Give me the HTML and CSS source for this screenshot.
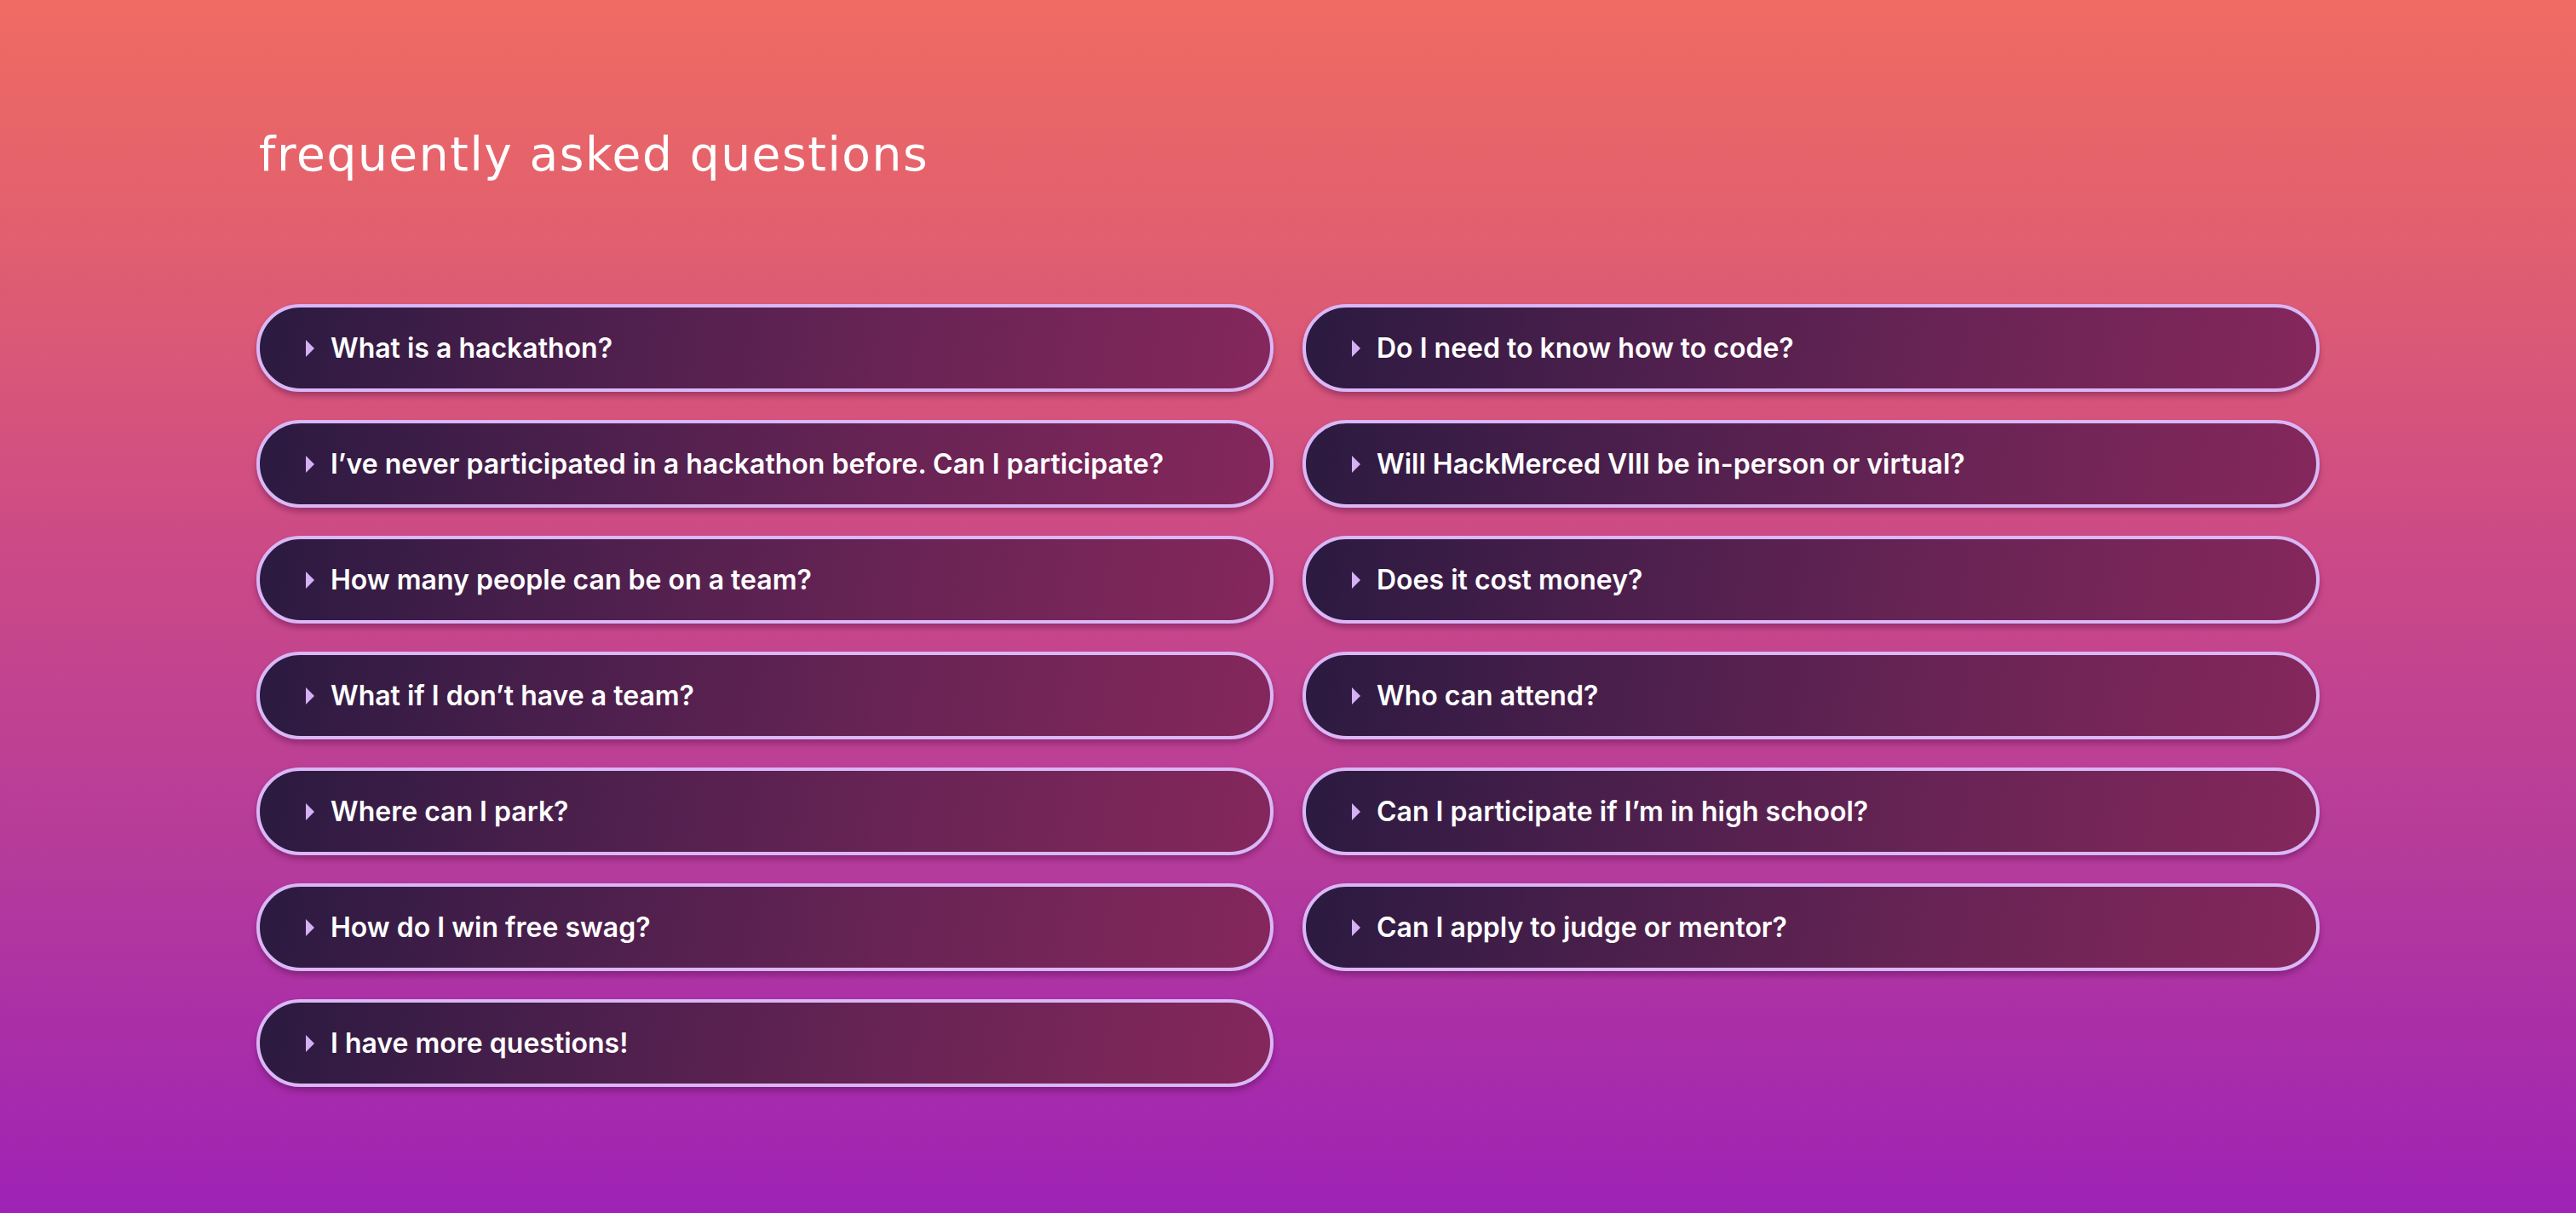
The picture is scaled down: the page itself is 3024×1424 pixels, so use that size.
FILE: index.html
```html
<!DOCTYPE html>
<html lang="en">
<head>
<meta charset="utf-8">
<title>FAQ</title>
<link rel="stylesheet" href="styles.css">
</head>
<body>
<section class="faq">
  <h2 class="faq-title">frequently asked questions</h2>
  <div class="faq-grid">
    <div class="faq-col">
      <div class="faq-item"><span class="arrow"></span><span class="q">What is a hackathon?</span></div>
      <div class="faq-item"><span class="arrow"></span><span class="q">I’ve never participated in a hackathon before. Can I participate?</span></div>
      <div class="faq-item"><span class="arrow"></span><span class="q">How many people can be on a team?</span></div>
      <div class="faq-item"><span class="arrow"></span><span class="q">What if I don’t have a team?</span></div>
      <div class="faq-item"><span class="arrow"></span><span class="q">Where can I park?</span></div>
      <div class="faq-item"><span class="arrow"></span><span class="q">How do I win free swag?</span></div>
      <div class="faq-item"><span class="arrow"></span><span class="q">I have more questions!</span></div>
    </div>
    <div class="faq-col">
      <div class="faq-item"><span class="arrow"></span><span class="q">Do I need to know how to code?</span></div>
      <div class="faq-item"><span class="arrow"></span><span class="q">Will HackMerced VIII be in-person or virtual?</span></div>
      <div class="faq-item"><span class="arrow"></span><span class="q">Does it cost money?</span></div>
      <div class="faq-item"><span class="arrow"></span><span class="q">Who can attend?</span></div>
      <div class="faq-item"><span class="arrow"></span><span class="q">Can I participate if I’m in high school?</span></div>
      <div class="faq-item"><span class="arrow"></span><span class="q">Can I apply to judge or mentor?</span></div>
    </div>
  </div>
</section>
</body>
</html>
```

FILE: styles.css
```css
html, body {
  margin: 0;
  padding: 0;
}
body {
  width: 3024px;
  height: 1424px;
  overflow: hidden;
  background: linear-gradient(180deg, #ef6b62 0%, #e15f6f 20%, #cc4a86 45%, #b43a9c 72%, #9e22b5 100%);
  font-family: "Inter", "DejaVu Sans", sans-serif;
}
.faq {
  padding: 0 0 0 301px;
}
.faq-title {
  margin: 0 0 0 3px;
  padding-top: 150px;
  height: 62px;
  font-family: "DejaVu Sans", "Liberation Sans", sans-serif;
  font-weight: 400;
  font-size: 55px;
  line-height: 62px;
  color: #ffffff;
  letter-spacing: 1.6px;
}
.faq-grid {
  margin-top: 145px;
  display: grid;
  grid-template-columns: 1194px 1194px;
  column-gap: 34px;
}
.faq-col {
  display: flex;
  flex-direction: column;
  gap: 33px;
}
.faq-item {
  box-sizing: border-box;
  height: 103px;
  border: 4px solid #dab7f6;
  border-radius: 52px;
  background: linear-gradient(100deg, #2b1a40 0%, #4a1f4c 30%, #6a2455 65%, #85275c 100%);
  box-shadow: 0 5px 6px rgba(70, 10, 60, 0.35);
  display: flex;
  align-items: center;
  padding-left: 54px;
  gap: 19px;
}
.arrow {
  width: 0;
  height: 0;
  border-top: 10px solid transparent;
  border-bottom: 10px solid transparent;
  border-left: 10px solid #d5b0f5;
  flex: none;
}
.q {
  color: #ffffff;
  font-size: 32px;
  font-weight: 600;
  letter-spacing: 0;
}
```
